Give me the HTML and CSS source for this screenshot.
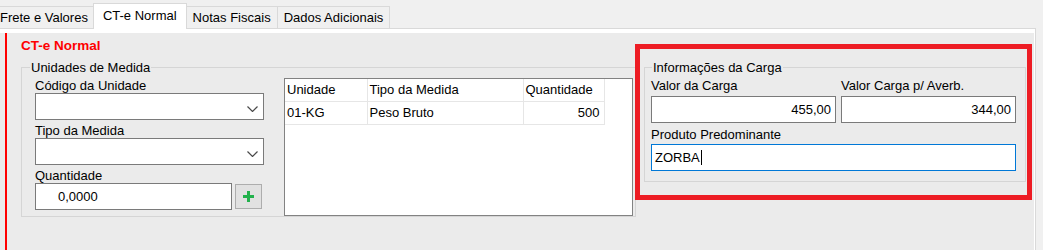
FILE: index.html
```html
<!DOCTYPE html>
<html lang="pt-BR">
<head>
    <meta charset="UTF-8">
    <meta name="viewport" content="width=device-width, initial-scale=1.0">
    <title>CT-e Normal</title>
    <link rel="stylesheet" href="styles.css">
</head>
<body>
    <div class="tabs">
        <div class="tab first">Frete e Valores</div>
        <div class="tab active">CT-e Normal</div>
        <div class="tab after">Notas Fiscais</div>
        <div class="tab after">Dados Adicionais</div>
    </div>

    <div class="page">
        <div class="panel">
            <div class="content">
                <div class="title">CT-e Normal</div>

                <div class="row">
                    <fieldset class="group units">
                        <legend>Unidades de Medida</legend>
                        <div class="units-body">
                            <div class="form-col">
                                <label>Código da Unidade</label>
                                <div class="combo">
                                    <svg width="11" height="6" viewBox="0 0 11 6"><path d="M0.5 0.5 L5.5 5.5 L10.5 0.5" fill="none" stroke="#4a4a4a" stroke-width="1.2"/></svg>
                                </div>
                                <label class="next">Tipo da Medida</label>
                                <div class="combo">
                                    <svg width="11" height="6" viewBox="0 0 11 6"><path d="M0.5 0.5 L5.5 5.5 L10.5 0.5" fill="none" stroke="#4a4a4a" stroke-width="1.2"/></svg>
                                </div>
                                <label class="next">Quantidade</label>
                                <div class="qty-row">
                                    <div class="edit qty">0,0000</div>
                                    <button class="add-button">
                                        <svg width="11" height="11" viewBox="0 0 11 11"><rect x="0" y="4" width="11" height="3" fill="#22B14C"/><rect x="4" y="0" width="3" height="11" fill="#22B14C"/></svg>
                                    </button>
                                </div>
                            </div>

                            <div class="grid">
                                <table>
                                    <colgroup>
                                        <col style="width: 82px">
                                        <col style="width: 156px">
                                        <col style="width: 81px">
                                    </colgroup>
                                    <tr>
                                        <th>Unidade</th>
                                        <th>Tipo da Medida</th>
                                        <th>Quantidade</th>
                                    </tr>
                                    <tr>
                                        <td>01-KG</td>
                                        <td>Peso Bruto</td>
                                        <td class="num">500</td>
                                    </tr>
                                </table>
                            </div>
                        </div>
                    </fieldset>

                    <div class="highlight">
                        <fieldset class="group cargo">
                            <legend>Informações da Carga</legend>
                            <div class="field-row">
                                <div class="field">
                                    <label>Valor da Carga</label>
                                    <div class="edit num value-carga">455,00</div>
                                </div>
                                <div class="field">
                                    <label>Valor Carga p/ Averb.</label>
                                    <div class="edit num value-averb">344,00</div>
                                </div>
                            </div>
                            <label class="produto">Produto Predominante</label>
                            <div class="edit focus">ZORBA<span class="caret"></span></div>
                        </fieldset>
                    </div>
                </div>
            </div>
        </div>
    </div>
</body>
</html>
```

FILE: styles.css
```css
body {
    margin: 0;
    width: 1043px;
    height: 250px;
    overflow: hidden;
    background-color: #F0F0F0;
    font-family: "Liberation Sans", Arial, sans-serif;
    font-size: 13px;
    color: #000000;
}

/* abas */
.tabs {
    display: flex;
    align-items: flex-end;
    height: 28px;
}

.tab {
    height: 22px;
    box-sizing: border-box;
    padding: 0 5px;
    border-top: 1px solid #D9D9D9;
    border-left: 1px solid #D9D9D9;
    line-height: 21px;
    background-color: #F0F0F0;
    white-space: nowrap;
}

.tab.first {
    margin-left: -6px;
}

.tab.after {
    border-left: none;
    border-right: 1px solid #D9D9D9;
    padding: 0 6px;
}

.tab.active {
    position: relative;
    z-index: 1;
    height: 26px;
    margin-bottom: -1px;
    padding: 1px 9px 0;
    border-right: 1px solid #D9D9D9;
    background-color: #FFFFFF;
}

.page {
    width: 1036px;
    box-sizing: border-box;
    border-top: 1px solid #D9D9D9;
    border-right: 1px solid #D9D9D9;
    padding: 4px 1px 0 0;
    background-color: #FFFFFF;
}

.panel {
    height: 217px;
    padding-left: 5px;
    background-color: #EBEBEB;
}

.content {
    height: 100%;
    padding-left: 14px;
    border-left: 2px solid #FF0000;
}

.title {
    padding-top: 5px;
    margin-bottom: 7px;
    line-height: 15px;
    color: #FF0000;
    font-weight: bold;
    font-size: 13.5px;
}

.row {
    display: flex;
    align-items: flex-start;
}

/* group boxes */
.group {
    margin: 0;
    min-width: 0;
    box-sizing: border-box;
    border: 1px solid #D5D5D5;
}

.group legend {
    padding: 0 1px;
    line-height: 15px;
}

.group label {
    display: block;
    line-height: 15px;
}

.units {
    width: 615px;
    padding: 3px 2px 0 13px;
}

.units legend {
    margin-left: -5px;
}

.units-body {
    display: flex;
    gap: 20px;
}

.form-col {
    width: 229px;
    display: flex;
    flex-direction: column;
}

.form-col label.next {
    margin-top: 3px;
}

.combo {
    height: 27px;
    box-sizing: border-box;
    display: flex;
    align-items: center;
    justify-content: flex-end;
    padding: 4px 5px 0 0;
    border: 1px solid #7A7A7A;
    background-color: #FFFFFF;
}

.edit {
    height: 27px;
    box-sizing: border-box;
    border: 1px solid #7A7A7A;
    background-color: #FFFFFF;
    line-height: 25px;
    white-space: nowrap;
}

.qty-row {
    display: flex;
    align-items: flex-start;
    gap: 3px;
}

.qty {
    width: 197px;
    padding-left: 22px;
}

.add-button {
    width: 27px;
    height: 25px;
    margin-top: 1px;
    padding: 0;
    display: flex;
    align-items: center;
    justify-content: center;
    border: 1px solid #ADADAD;
    background-color: #E1E1E1;
}

/* grade */
.grid {
    width: 349px;
    height: 138px;
    box-sizing: border-box;
    border: 1px solid #828282;
    background-color: #FFFFFF;
}

.grid table {
    width: 319px;
    table-layout: fixed;
    border-collapse: collapse;
}

.grid th,
.grid td {
    height: 22px;
    padding: 0 3px 0 2px;
    border-right: 1px solid #E6E6E6;
    border-bottom: 1px solid #E6E6E6;
    font-weight: normal;
    text-align: left;
    line-height: 22px;
    white-space: nowrap;
}

.grid td.num {
    text-align: right;
    padding-right: 4px;
}

/* destaque vermelho */
.highlight {
    position: relative;
    width: 397px;
    box-sizing: border-box;
    margin: -16px 0 0 -1px;
    padding: 11px 1px 13px 4px;
    border: 5px solid #ED1C24;
}

.cargo {
    width: 382px;
    padding: 3px 9px 10px 6px;
}

.cargo legend {
    margin-left: 1px;
}

.cargo .field label {
    padding-bottom: 3px;
}

.field-row {
    display: flex;
    gap: 5px;
}

.field {
    display: flex;
    flex-direction: column;
}

.edit.num {
    text-align: right;
    padding-right: 4px;
}

.value-carga {
    width: 185px;
}

.value-averb {
    width: 175px;
    padding-right: 5px;
}

.cargo label.produto {
    margin-top: 4px;
    padding-bottom: 2px;
}

.edit.focus {
    padding-left: 3px;
    border-color: #0078D7;
}

.caret {
    display: inline-block;
    width: 1px;
    height: 15px;
    margin-left: 1px;
    vertical-align: -3px;
    background-color: #000000;
}
```
